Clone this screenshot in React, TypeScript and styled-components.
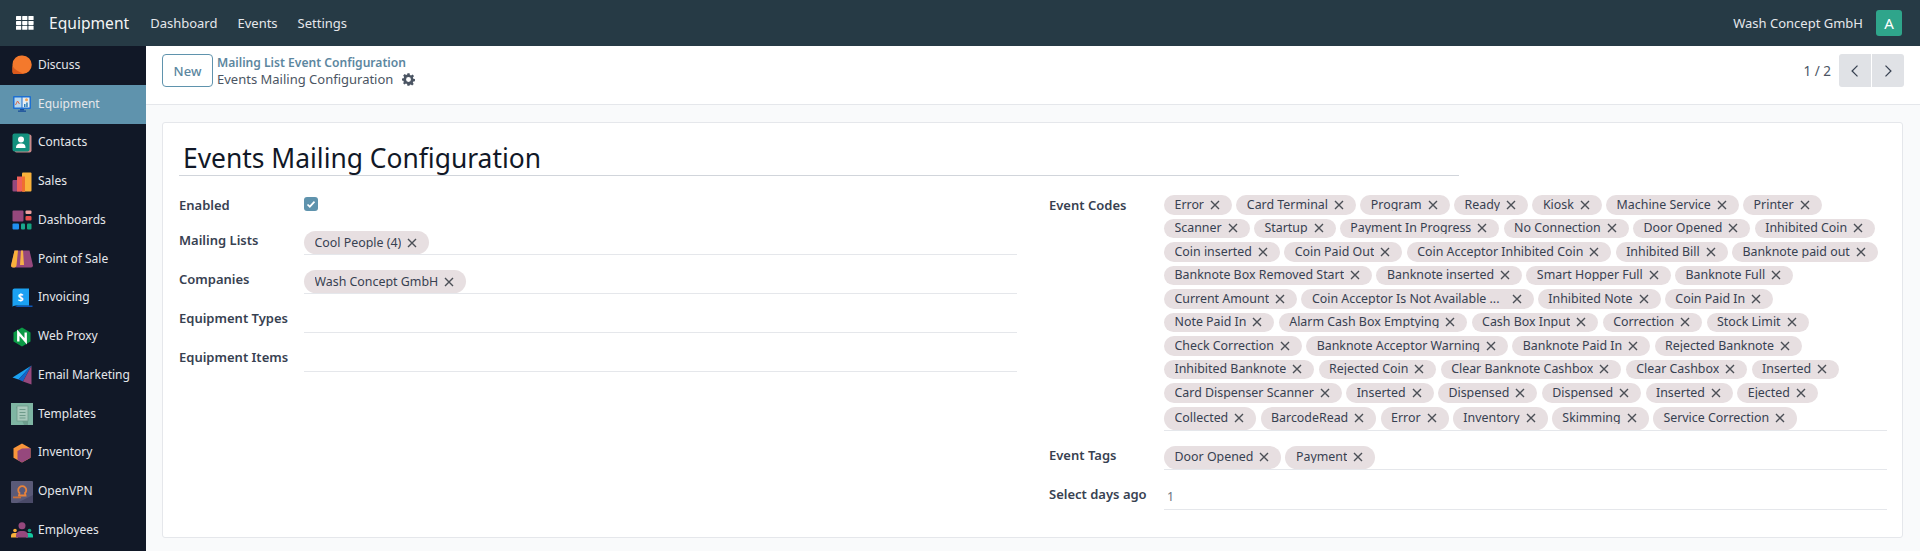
import React from 'react';
import styled, { createGlobalStyle } from 'styled-components';

const GlobalStyle = createGlobalStyle`
  html, body {
    margin: 0;
    padding: 0;
    height: 551px;
    overflow: hidden;
    background: #f9fafb;
    font-family: 'Noto Sans', 'Open Sans', sans-serif;
    font-size: 12px;
    color: #374151;
  }
  * { box-sizing: border-box; }
`;

const eventCodes: string[][] = [
  ['Error', 'Card Terminal', 'Program', 'Ready', 'Kiosk', 'Machine Service', 'Printer'],
  ['Scanner', 'Startup', 'Payment In Progress', 'No Connection', 'Door Opened', 'Inhibited Coin'],
  ['Coin inserted', 'Coin Paid Out', 'Coin Acceptor Inhibited Coin', 'Inhibited Bill', 'Banknote paid out'],
  ['Banknote Box Removed Start', 'Banknote inserted', 'Smart Hopper Full', 'Banknote Full'],
  ['Current Amount', 'Coin Acceptor Is Not Available ...', 'Inhibited Note', 'Coin Paid In'],
  ['Note Paid In', 'Alarm Cash Box Emptying', 'Cash Box Input', 'Correction', 'Stock Limit'],
  ['Check Correction', 'Banknote Acceptor Warning', 'Banknote Paid In', 'Rejected Banknote'],
  ['Inhibited Banknote', 'Rejected Coin', 'Clear Banknote Cashbox', 'Clear Cashbox', 'Inserted'],
  ['Card Dispenser Scanner', 'Inserted', 'Dispensed', 'Dispensed', 'Inserted', 'Ejected'],
  ['Collected', 'BarcodeRead', 'Error', 'Inventory', 'Skimming', 'Service Correction'],
];

const Discuss = () => (
  <svg viewBox="0 0 22 22" width="22" height="22">
    <path d="M11.500 1.500a9 9 0 0 1 0 18.500H3.500a2 2 0 0 1-2-2v-7.500a9 9 0 0 1 10-9z" fill="#f4792c" />
    <path d="M1.500 12c2 3.500 6 6 11.500 7.900-.5.100-1 .1-1.500.1h-8a2 2 0 0 1-2-2z" fill="#d9591c" />
  </svg>
);

const Monitor = () => (
  <svg viewBox="0 0 22 22" width="22" height="22">
    <rect x="2" y="3" width="18" height="13" rx="1" fill="#1d6fd1" />
    <rect x="3.500" y="4.500" width="7" height="10" fill="#b7d8ee" />
    <rect x="11.500" y="4.500" width="7" height="10" fill="#e6eef3" />
    <path d="M4.500 12l2-4 2 3" stroke="#d8694a" strokeWidth="1" fill="none" />
    <rect x="13" y="11" width="1.500" height="3" fill="#2f7fb8" />
    <rect x="15.200" y="9.500" width="1.500" height="4.500" fill="#2f7fb8" />
    <circle cx="15.500" cy="6.800" r="1.500" fill="#f2a65a" />
    <rect x="9" y="16" width="4" height="1.500" fill="#1b4f9c" />
    <rect x="7" y="17.500" width="8" height="1.300" fill="#1b4f9c" />
  </svg>
);

const Contact = () => (
  <svg viewBox="0 0 22 22" width="22" height="22">
    <rect x="3.500" y="2.500" width="17" height="18" rx="2" fill="#c98a8a" />
    <rect x="1.500" y="1.500" width="17" height="18" rx="2" fill="#13907e" />
    <circle cx="10" cy="7.500" r="3" fill="#fff" />
    <path d="M5 16c0-3.500 2-4.500 5-4.500s4.500 1 4.500 4.500z" fill="#fff" />
  </svg>
);

const Sales = () => (
  <svg viewBox="0 0 22 22" width="22" height="22">
    <rect x="1.500" y="9" width="9" height="11.500" rx="1" fill="#96487d" />
    <rect x="6" y="5.500" width="8" height="15" fill="#f0605a" />
    <rect x="11" y="1.500" width="9.500" height="19" rx="1" fill="#f9b13b" />
    <rect x="11" y="5.500" width="3" height="15" fill="#ef6e2f" />
  </svg>
);

const Dashboards = () => (
  <svg viewBox="0 0 22 22" width="22" height="22">
    <rect x="1.500" y="1.500" width="11" height="11" rx="1" fill="#96487d" />
    <rect x="14.500" y="1.500" width="6" height="3.500" rx="1" fill="#f0a0a0" />
    <rect x="14.500" y="7" width="6" height="4.500" rx="1" fill="#e9504f" />
    <rect x="1.500" y="14.500" width="6.500" height="6" rx="1" fill="#1f8ef1" />
    <rect x="10" y="14.500" width="4" height="6" rx="1" fill="#1aa88f" />
    <rect x="16" y="14.500" width="4.500" height="6" rx="1" fill="#14a37f" />
  </svg>
);

const Awning = () => (
  <svg viewBox="0 0 22 22" width="22" height="22">
    <path d="M3.500 2.500h15L22 17.500a2 2 0 0 1-2 2H2a2 2 0 0 1-2-2z" fill="#96487d" />
    <path d="M3.500 2.500H7L5.500 17.500a2.500 2 0 0 1-2 2H2a2 2 0 0 1-2-2z" fill="#f9b13b" />
    <path d="M10 2.500h2l1 14.500h-4z" fill="#f5b04a" />
  </svg>
);

const Invoice = () => (
  <svg viewBox="0 0 22 22" width="22" height="22">
    <path d="M4 20h17.500v-1.500H7z" fill="#0e56b8" />
    <path d="M3.500 1.500H18v17H5c-2 0-3.500 1-3.500 1.500V3.500a2 2 0 0 1 2-2z" fill="#1ba1f2" />
    <text x="9.500" y="13.500" fontSize="10" fontWeight="700" fill="#fff" textAnchor="middle" fontFamily="Noto Sans">$</text>
  </svg>
);

const Nginx = () => (
  <svg viewBox="0 0 22 22" width="22" height="22">
    <path d="M11 1.500l8.500 4.900v9.200l-8.500 4.900-8.500-4.900V6.400z" fill="#0c9a46" />
    <path d="M7.300 15.500V6.800L14.700 15.200V6.500" stroke="#fff" strokeWidth="2.400" fill="none" />
  </svg>
);

const Plane = () => (
  <svg viewBox="0 0 22 22" width="22" height="22">
    <path d="M20.500 1.500L1.500 13.500l6 2z" fill="#1ba1f2" />
    <path d="M20.500 1.500L7.500 15.500l4.500 2z" fill="#1565c9" />
    <path d="M20.500 1.500v19L12 17.500z" fill="#96487d" />
  </svg>
);

const Templates = () => (
  <svg viewBox="0 0 22 22" width="22" height="22">
    <rect width="22" height="22" fill="#7fb5a3" />
    <path d="M5 4h12v18H13z" fill="#6d9d8d" />
    <rect x="6" y="3" width="11" height="15" fill="#a9c9bc" stroke="#6f9b8b" strokeWidth=".8" />
    <path d="M8.500 6.500h6M8.500 9.500h6M8.500 12.500h6M8.500 15h6" stroke="#6f9b8b" strokeWidth="1" />
  </svg>
);

const Inventory = () => (
  <svg viewBox="0 0 22 22" width="22" height="22">
    <path d="M11 1.500l8.500 4.800v9.400L11 20.500l-8.500-4.800V6.300z" fill="#f9953b" />
    <path d="M11 6.500l8.500-.2v9.400L11 20.500l-4.500-2.500V9z" fill="#96487d" />
  </svg>
);

const Vpn = () => (
  <svg viewBox="0 0 22 22" width="22" height="22">
    <rect width="22" height="22" rx="1" fill="#5a5a78" />
    <path d="M22 14v8H6z" fill="#4a4a68" />
    <path d="M8.500 12a4 4 0 1 1 5.500 0l.5 2.500h-6.500z" fill="none" stroke="#e8833a" strokeWidth="1.800" />
    <rect x="2" y="15.500" width="8" height="1.800" fill="#c9703a" />
  </svg>
);

const People = () => (
  <svg viewBox="0 0 22 22" width="22" height="22">
    <circle cx="11" cy="6.800" r="3.500" fill="#96487d" />
    <circle cx="4" cy="11.500" r="1.800" fill="#f9b13b" />
    <circle cx="18.500" cy="11.500" r="1.800" fill="#14a37f" />
    <path d="M0 18.500v-1.500a3 3 0 0 1 3-3h4v4.500z" fill="#f9b13b" />
    <path d="M15 14h4a3 3 0 0 1 3 3v1.500h-7z" fill="#14c9a0" />
    <path d="M5 18.500v-2.500a4.500 4.500 0 0 1 5-4h2a4.500 4.500 0 0 1 5 4v2.500z" fill="#96487d" />
  </svg>
);

const sidebarItems = [
  { name: 'Discuss', Icon: Discuss },
  { name: 'Equipment', Icon: Monitor, active: true },
  { name: 'Contacts', Icon: Contact },
  { name: 'Sales', Icon: Sales },
  { name: 'Dashboards', Icon: Dashboards },
  { name: 'Point of Sale', Icon: Awning },
  { name: 'Invoicing', Icon: Invoice },
  { name: 'Web Proxy', Icon: Nginx },
  { name: 'Email Marketing', Icon: Plane },
  { name: 'Templates', Icon: Templates },
  { name: 'Inventory', Icon: Inventory },
  { name: 'OpenVPN', Icon: Vpn },
  { name: 'Employees', Icon: People },
];

const Tag: React.FC<{ label: string; tall?: boolean; wideGap?: boolean }> = ({ label, tall, wideGap }) => (
  <Chip $tall={tall}>
    <ChipText $wideGap={wideGap}>{label}</ChipText>
    <svg viewBox="0 0 10 10" width="10" height="10">
      <path d="M1 1l8 8M9 1l-8 8" stroke="#4b4f56" strokeWidth="1.400" />
    </svg>
  </Chip>
);

export default function App() {
  return (
    <Page>
      <GlobalStyle />
      <TopBar>
        <AppsButton>
          <svg viewBox="0 0 18 14" width="18" height="14">
            {[0, 1, 2].map((r) =>
              [0, 1, 2].map((c) => (
                <rect key={`${r}-${c}`} x={c * 6.2} y={r * 4.9} width="5.200" height="4" rx=".6" fill="#fff" />
              )),
            )}
          </svg>
        </AppsButton>
        <Brand>Equipment</Brand>
        <TopLink>Dashboard</TopLink>
        <TopLink>Events</TopLink>
        <TopLink>Settings</TopLink>
        <Company>Wash Concept GmbH</Company>
        <Avatar>A</Avatar>
      </TopBar>
      <Body>
        <Sidebar>
          {sidebarItems.map(({ name, Icon, active }) => (
            <SideItem key={name} $active={active}>
              <IconSlot>
                <Icon />
              </IconSlot>
              <SideLabel>{name}</SideLabel>
            </SideItem>
          ))}
        </Sidebar>
        <Main>
          <ControlPanel>
            <NewButton>New</NewButton>
            <Breadcrumb>
              <BreadcrumbLink>Mailing List Event Configuration</BreadcrumbLink>
              <BreadcrumbCurrent>
                Events Mailing Configuration
                <svg viewBox="0 0 24 24" width="13" height="13">
                  <path
                    fill="#4b5563"
                    d="M10 1h4l.6 3 2.200 1 2.600-1.700 2.800 2.800L20 8.700l.9 2.300 3 .5v4l-3 .6-.9 2-.1.1 1.700 2.600-2.800 2.800-2.600-1.700-2.200.9L14 24h-4l-.6-3-2.200-.9-2.600 1.700-2.800-2.800L3.500 17.400 2.600 15 0 14.500v-4l3-.5.900-2.300L2.200 5.100 5 2.300 7.600 4l2-.9zM12 8a4.500 4.500 0 1 0 0 9 4.500 4.500 0 0 0 0-9z"
                    fillRule="evenodd"
                    transform="translate(0 -.5)"
                  />
                </svg>
              </BreadcrumbCurrent>
            </Breadcrumb>
            <Pager>
              <PagerText>1 / 2</PagerText>
              <PagerButton $side="left">
                <svg viewBox="0 0 12 16" width="10" height="14">
                  <path d="M9 1.500L2.500 8 9 14.500" stroke="#374151" strokeWidth="1.500" fill="none" />
                </svg>
              </PagerButton>
              <PagerButton $side="right">
                <svg viewBox="0 0 12 16" width="10" height="14">
                  <path d="M3 1.500L9.500 8 3 14.500" stroke="#374151" strokeWidth="1.500" fill="none" />
                </svg>
              </PagerButton>
            </Pager>
          </ControlPanel>
          <Content>
            <Card>
              <Title>Events Mailing Configuration</Title>
              <Columns>
                <Column>
                  <Row $labelWidth={125}>
                    <Label>Enabled</Label>
                    <CheckBox>
                      <svg viewBox="0 0 14 14" width="14" height="14">
                        <path d="M3.500 7.500l2.300 2.200 4.700-5" stroke="#fff" strokeWidth="1.700" fill="none" />
                      </svg>
                    </CheckBox>
                  </Row>
                  <Row $labelWidth={125}>
                    <Label>Mailing Lists</Label>
                    <Field>
                      <Tag label="Cool People (4)" tall />
                    </Field>
                  </Row>
                  <Row $labelWidth={125}>
                    <Label>Companies</Label>
                    <Field>
                      <Tag label="Wash Concept GmbH" tall />
                    </Field>
                  </Row>
                  <Row $labelWidth={125}>
                    <Label>Equipment Types</Label>
                    <Field />
                  </Row>
                  <Row $labelWidth={125}>
                    <Label>Equipment Items</Label>
                    <Field />
                  </Row>
                </Column>
                <Column>
                  <Row $labelWidth={115}>
                    <Label>Event Codes</Label>
                    <Field>
                      <ChipStack>
                        {eventCodes.map((chips, i) => (
                          <ChipLine key={i}>
                            {chips.map((label, j) => (
                              <Tag
                                key={j}
                                label={label}
                                tall={i === eventCodes.length - 1}
                                wideGap={label.endsWith('...')}
                              />
                            ))}
                          </ChipLine>
                        ))}
                      </ChipStack>
                    </Field>
                  </Row>
                  <Row $labelWidth={115}>
                    <Label>Event Tags</Label>
                    <Field>
                      <Tag label="Door Opened" tall />
                      <Tag label="Payment" tall />
                    </Field>
                  </Row>
                  <Row $labelWidth={115}>
                    <Label>Select days ago</Label>
                    <Field>
                      <DaysValue>1</DaysValue>
                    </Field>
                  </Row>
                </Column>
              </Columns>
            </Card>
          </Content>
        </Main>
      </Body>
    </Page>
  );
}

const Page = styled.div`
  width: 1920px;
  height: 551px;
  display: flex;
  flex-direction: column;
  overflow: hidden;
`;

const TopBar = styled.header`
  height: 46px;
  flex: none;
  display: flex;
  align-items: center;
  background: #263a45;
  padding: 0 18px 0 16px;
  color: #fff;
`;

const AppsButton = styled.div`
  display: flex;
  align-items: center;
  margin-right: 15px;
`;

const Brand = styled.div`
  font-size: 15.600px;
  margin-right: 21px;
  color: #f3f4f6;
`;

const TopLink = styled.div`
  font-size: 13px;
  margin-right: 20px;
  color: #e5e7eb;
`;

const Company = styled.div`
  margin-left: auto;
  font-size: 13px;
  color: #e5e7eb;
  margin-right: 13px;
`;

const Avatar = styled.div`
  width: 26px;
  height: 26px;
  border-radius: 3px;
  background: #2fa58b;
  display: flex;
  align-items: center;
  justify-content: center;
  font-size: 15px;
  color: #fff;
`;

const Body = styled.div`
  flex: 1;
  display: flex;
  min-height: 0;
`;

const Sidebar = styled.nav`
  width: 146px;
  flex: none;
  background: #111827;
`;

const SideItem = styled.div<{ $active?: boolean }>`
  height: 38.750px;
  display: flex;
  align-items: center;
  padding-left: 11px;
  font-size: 12px;
  color: #e5e7eb;
  background: ${(props) => (props.$active ? '#5f93ad' : 'transparent')};
`;

const SideLabel = styled.span`
  margin-top: -2px;
`;

const IconSlot = styled.span`
  width: 27px;
  display: flex;
  align-items: center;
  flex: none;
  svg {
    display: block;
  }
`;

const Main = styled.main`
  flex: 1;
  min-width: 0;
  display: flex;
  flex-direction: column;
`;

const ControlPanel = styled.div`
  height: 59px;
  flex: none;
  background: #fff;
  border-bottom: 1px solid #e5e7eb;
  display: flex;
  align-items: flex-start;
  padding: 8px 16px 0 16px;
`;

const NewButton = styled.div`
  width: 51px;
  height: 33px;
  border: 1px solid #5f93ad;
  border-radius: 4px;
  color: #5c87a0;
  display: flex;
  align-items: center;
  justify-content: center;
  font-size: 13px;
  font-weight: 500;
  margin-right: 4px;
`;

const Breadcrumb = styled.div`
  display: flex;
  flex-direction: column;
  line-height: 17px;
`;

const BreadcrumbLink = styled.div`
  font-size: 12.100px;
  font-weight: 600;
  color: #5c87a0;
`;

const BreadcrumbCurrent = styled.div`
  font-size: 13px;
  color: #4b5563;
  display: flex;
  align-items: center;
  gap: 9px;
`;

const Pager = styled.div`
  margin-left: auto;
  display: flex;
  align-items: center;
  height: 33px;
`;

const PagerText = styled.div`
  font-size: 13.500px;
  color: #4b5563;
  margin-right: 8px;
`;

const PagerButton = styled.div<{ $side: 'left' | 'right' }>`
  width: 32px;
  height: 33px;
  background: #e0e2e6;
  display: flex;
  align-items: center;
  justify-content: center;
  margin-left: ${(props) => (props.$side === 'right' ? '1px' : '0')};
  border-radius: ${(props) => (props.$side === 'left' ? '3px 0 0 3px' : '0 3px 3px 0')};
`;

const Content = styled.div`
  flex: 1;
  padding: 17px 17px 14px 16px;
  background: #f9fafb;
`;

const Card = styled.section`
  height: 416px;
  background: #fff;
  border: 1px solid #e5e7eb;
  border-radius: 3px;
  padding: 18px 15px 0 16px;
`;

const Title = styled.h1`
  margin: 0 428px 0 0;
  font-size: 26.400px;
  font-weight: 400;
  line-height: 34px;
  padding-left: 4px;
  color: #111827;
  border-bottom: 1px solid #d1d5db;
`;

const Columns = styled.div`
  display: grid;
  grid-template-columns: 838px 1fr;
  column-gap: 32px;
  margin-top: 20px;
`;

const Column = styled.div`
  display: flex;
  flex-direction: column;
  gap: 15px;
`;

const Row = styled.div<{ $labelWidth: number }>`
  display: grid;
  grid-template-columns: ${(props) => props.$labelWidth}px 1fr;
  align-items: start;
`;

const Label = styled.label`
  font-size: 13px;
  font-weight: 600;
  color: #374151;
  line-height: 18px;
  padding-bottom: 2px;
`;

const Field = styled.div`
  min-height: 24px;
  display: flex;
  flex-wrap: wrap;
  gap: 4px;
  border-bottom: 1px solid #e5e7eb;
`;

const CheckBox = styled.div`
  width: 14px;
  height: 14px;
  border-radius: 3px;
  background: #5f93ad;
  margin-top: 1px;
  svg {
    display: block;
  }
`;

const ChipStack = styled.div`
  display: flex;
  flex-direction: column;
  gap: 4px;
  margin-top: -1px;
`;

const ChipLine = styled.div`
  display: flex;
  gap: 4.300px;
`;

const Chip = styled.div<{ $tall?: boolean }>`
  height: ${(props) => (props.$tall ? '23px' : '19.500px')};
  display: inline-flex;
  align-items: center;
  gap: 6px;
  padding: 0 12px 0 10.500px;
  border-radius: 12px;
  background: #e7dfe1;
  font-size: 12.400px;
  color: #374151;
  white-space: nowrap;
  svg {
    flex: none;
  }
`;

const ChipText = styled.span<{ $wideGap?: boolean }>`
  display: block;
  line-height: 14px;
  height: 13px;
  overflow: hidden;
  margin-top: -1px;
  margin-right: ${(props) => (props.$wideGap ? '6px' : '0')};
`;

const DaysValue = styled.div`
  font-size: 12.400px;
  line-height: 24px;
  padding-left: 3px;
  color: #6b7280;
`;
